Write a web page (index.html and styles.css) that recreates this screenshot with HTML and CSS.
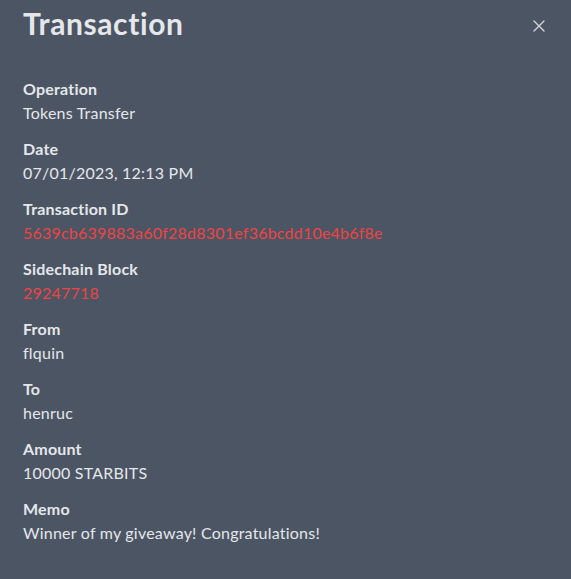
FILE: index.html
```html
<!DOCTYPE html>
<html>
<head>
<meta charset="utf-8">
<link rel="stylesheet" href="styles.css">
</head>
<body>
<div class="modal">
  <div class="header">
    <h1 class="title">Transaction</h1>
    <button class="close" aria-label="Close">
      <svg width="12" height="12" viewBox="0 0 12 12"><path d="M1 1L11 11M11 1L1 11" stroke="#d1d5db" stroke-width="1.4" stroke-linecap="round"/></svg>
    </button>
  </div>
  <dl class="details">
    <div class="item"><dt>Operation</dt><dd>Tokens Transfer</dd></div>
    <div class="item"><dt>Date</dt><dd>07/01/2023, 12:13 PM</dd></div>
    <div class="item"><dt>Transaction ID</dt><dd class="link">5639cb639883a60f28d8301ef36bcdd10e4b6f8e</dd></div>
    <div class="item"><dt>Sidechain Block</dt><dd class="link">29247718</dd></div>
    <div class="item"><dt>From</dt><dd>flquin</dd></div>
    <div class="item"><dt>To</dt><dd>henruc</dd></div>
    <div class="item"><dt>Amount</dt><dd>10000 STARBITS</dd></div>
    <div class="item"><dt>Memo</dt><dd>Winner of my giveaway! Congratulations!</dd></div>
  </dl>
</div>
</body>
</html>
```
FILE: styles.css
```css
html, body {
  margin: 0;
  background: #4b5563;
  height: 100%;
}
body {
  font-family: Lato, "Noto Sans", sans-serif;
  color: #e5e7eb;
}
.modal {
  padding: 5px 23px 20px 23px;
}
.header {
  display: flex;
  justify-content: space-between;
  align-items: flex-start;
}
.title {
  margin: 0;
  font-size: 30px;
  line-height: 36px;
  font-weight: 700;
  letter-spacing: 0.6px;
  color: #e5e7eb;
}
.close {
  background: none;
  border: 0;
  padding: 0;
  margin: 15px 3px 0 0;
  width: 12px;
  height: 12px;
  display: flex;
  cursor: pointer;
}
.details {
  margin: 36px 0 0 0;
  display: flex;
  flex-direction: column;
  gap: 12px;
}
.item dt {
  font-size: 16px;
  line-height: 24px;
  font-weight: 700;
  letter-spacing: 0.2px;
}
.item dd {
  margin: 0;
  font-size: 16px;
  line-height: 24px;
  letter-spacing: 0.22px;
}
.item dd.link {
  color: #ef4444;
}
```
